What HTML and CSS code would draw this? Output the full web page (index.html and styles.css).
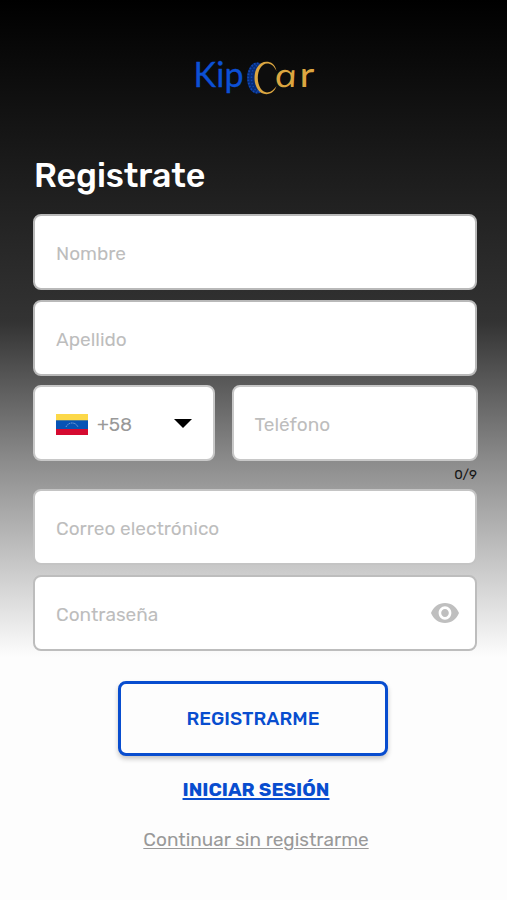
FILE: index.html
```html
<!DOCTYPE html>
<html lang="es">
<head>
<meta charset="utf-8">
<title>KipCar</title>
<link rel="stylesheet" href="styles.css">
</head>
<body>
<main class="screen">
  <svg class="logo" width="130" height="44" viewBox="0 0 130 44" role="img" aria-label="KipCar">
    <text class="logo-kip" x="1.500" y="32" textLength="50" lengthAdjust="spacing">Kip</text>
    <ellipse cx="65" cy="23" rx="10" ry="15.500" fill="#072c78"/>
    <ellipse cx="65.200" cy="23" rx="9" ry="14.600" fill="none" stroke="#1048b4" stroke-width="1.800" stroke-dasharray="1.600 1.500"/>
    <ellipse cx="66.500" cy="23" rx="7" ry="13" fill="none" stroke="#1048b4" stroke-width="1.500" stroke-dasharray="1.400 1.800"/>
    <ellipse cx="75" cy="23" rx="11" ry="15.400" fill="#0d0d0d"/>
    <path d="M84.500 16C83 9 79 6.800 74.300 6.800C67.500 6.800 62.500 14 62.500 23S67.500 39.200 74.300 39.200C79 39.200 83 36 84.500 31C81 36 78 37.400 75 37.400C70 37.400 65.800 31 65.800 23S70 8.600 75 8.600C79 8.600 82 11 84.500 16Z" fill="#dca640"/>
    <text class="logo-a" transform="translate(84 32) skewX(12) scale(1.280 1)">a</text>
    <text class="logo-r" transform="translate(107.500 32) scale(1.200 1)">r</text>
  </svg>
  <h1 class="title">Registrate</h1>
  <form class="form">
    <div class="field nombre"><span>Nombre</span></div>
    <div class="field apellido"><span>Apellido</span></div>
    <div class="phone">
      <div class="field country">
        <svg class="flag" width="32" height="21" viewBox="0 0 32 21">
          <path fill="#fcd848" d="M0 0h32v7H0z"/>
          <path fill="#0653b5" d="M0 6.300h32v9H0z"/>
          <path fill="#d50a30" d="M0 15h32v6H0z"/>
          <path d="M10 13Q12 9 16 9T22 13" fill="none" stroke="#7fa6d8" stroke-width="1" stroke-dasharray="1.500 .7"/>
        </svg>
        <span class="code">+58</span>
        <svg class="caret" width="18" height="9" viewBox="0 0 18 9"><path d="M0 0h18L9 9z"/></svg>
      </div>
      <div class="field number"><span>Teléfono</span></div>
    </div>
    <div class="counter">0/9</div>
    <div class="field correo"><span>Correo electrónico</span></div>
    <div class="field clave"><span>Contraseña</span>
      <svg class="eye" width="28" height="20" viewBox="1 4.500 22 15" preserveAspectRatio="none"><path fill="#bfbfbf" d="M12 4.500C7 4.500 2.730 7.610 1 12c1.730 4.390 6 7.500 11 7.500s9.270-3.110 11-7.500c-1.730-4.390-6-7.500-11-7.500zM12 17c-2.760 0-5-2.240-5-5s2.240-5 5-5 5 2.240 5 5-2.240 5-5 5zm0-8c-1.660 0-3 1.340-3 3s1.340 3 3 3 3-1.340 3-3-1.340-3-3-3z"/></svg>
    </div>
    <button class="submit" type="button">REGISTRARME</button>
  </form>
  <a class="login">INICIAR SESIÓN</a>
  <a class="skip">Continuar sin registrarme</a>
</main>
</body>
</html>
```
FILE: styles.css
```css
* { box-sizing: border-box; }
body { margin: 0; font-family: Rubik, Roboto, sans-serif; }
.screen {
  width: 507px;
  height: 900px;
  padding: 55px 29px 0 33px;
  display: flex;
  flex-direction: column;
  background: linear-gradient(#000 0, #1a1a1a 160px, #333 322px, #8c8c8c 462px, #fdfdfd 657px);
}
.logo { display: block; margin-left: 159px; flex: none; overflow: visible; }
.logo text { font-family: Lato, sans-serif; font-size: 34px; stroke-width: 0.3px; }
.logo .logo-kip { fill: #0c50d4; stroke: #0c50d4; }
.logo .logo-a { font-family: "Open Sans", sans-serif; font-style: italic; font-size: 31.5px; fill: #dca640; }
.logo .logo-r { fill: #dca640; }
.title {
  margin: 57px 0 0 1px;
  height: 40px;
  line-height: 40px;
  font-size: 34px;
  font-weight: 500;
  letter-spacing: -0.1px;
  color: #fff;
}
.form { display: flex; flex-direction: column; margin-top: 18px; }
.field {
  width: 444px;
  height: 76px;
  padding: 3px 16px 0 21px;
  display: flex;
  align-items: center;
  border: 2px solid #b9b9b9;
  border-radius: 8px;
  background: #fff;
  color: #bdbdbd;
  font-size: 19px;
  line-height: 24px;
}
.apellido { margin-top: 10px; }
.phone { display: flex; gap: 17px; margin-top: 9px; }
.country { width: 182px; padding-right: 21px; border-color: #c8c8c8; }
.number { width: 247px; border-color: #c8c8c8; }
.code { margin-left: 9px; color: #999; }
.caret { margin-left: auto; margin-top: -2px; }
.counter {
  width: 444px;
  height: 28px;
  line-height: 27px;
  text-align: right;
  font-size: 13.5px;
  color: #161616;
}
.correo { border-color: #c4c4c4; }
.clave { margin-top: 10px; border-color: #bdbdbd; }
.eye { margin-left: auto; margin-top: -3px; }
.submit {
  width: 270px;
  height: 75px;
  margin: 30px 0 0 85px;
  padding: 0;
  border: 3px solid #084dcf;
  border-radius: 8px;
  background: #fdfdfd;
  box-shadow: 0 3px 5px rgba(0, 0, 0, 0.22);
  color: #084dcf;
  font: 500 19px/24px Rubik, Roboto, sans-serif;
}
.login, .skip {
  align-self: center;
  font-size: 19px;
  line-height: 24px;
  text-decoration: underline;
  text-underline-offset: 2px;
}
.login { margin-top: 22px; margin-left: 1px; font-weight: 700; color: #084dcf; text-decoration-thickness: 1.5px; }
.skip { margin-top: 26px; margin-left: 1px; color: #999; }
```
